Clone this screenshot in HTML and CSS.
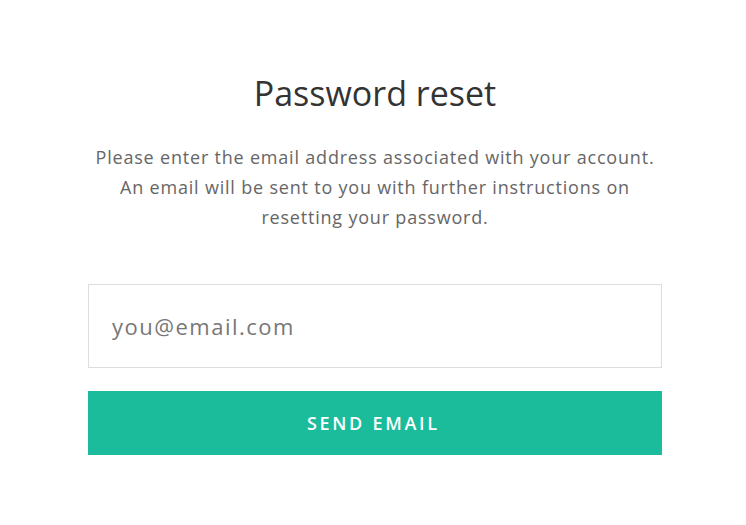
FILE: index.html
```html
<!DOCTYPE html>
<html>
<head>
<meta charset="utf-8">
<link rel="stylesheet" href="styles.css">
</head>
<body>
<main class="card">
  <h1 class="title">Password reset</h1>
  <p class="lead">Please enter the email address associated with your account.<br>An email will be sent to you with further instructions on<br>resetting your password.</p>
  <form class="form">
    <input class="field" type="email" placeholder="you@email.com">
    <button class="btn" type="button">SEND EMAIL</button>
  </form>
</main>
</body>
</html>
```
FILE: styles.css
```css
html, body { margin: 0; padding: 0; background: #fff; }
body { font-family: "Open Sans", "Liberation Sans", sans-serif; }
.card {
  width: 574px;
  margin: 0 0 0 88px;
  padding-top: 70px;
  display: flex;
  flex-direction: column;
  align-items: stretch;
}
.title {
  margin: 0;
  text-align: center;
  font-size: 34px;
  font-weight: 400;
  color: #333;
  line-height: 46px;
}
.lead {
  margin: 26px -10px 0;
  text-align: center;
  font-size: 18px;
  line-height: 30px;
  letter-spacing: 0.8px;
  color: #666;
}
.form {
  margin-top: 52px;
  display: flex;
  flex-direction: column;
  gap: 23px;
}
.field {
  box-sizing: border-box;
  height: 84px;
  border: 1px solid #ddd;
  padding: 0 23px;
  font-family: inherit;
  font-size: 22px;
  letter-spacing: 1.5px;
  color: #333;
  outline: none;
}
.field::placeholder { color: #777; }
.btn {
  height: 64px;
  border: none;
  background: #1abc9c;
  color: #fff;
  font-family: inherit;
  font-size: 18px;
  font-weight: 600;
  letter-spacing: 2.7px;
  padding-left: 2.7px;
}
```
